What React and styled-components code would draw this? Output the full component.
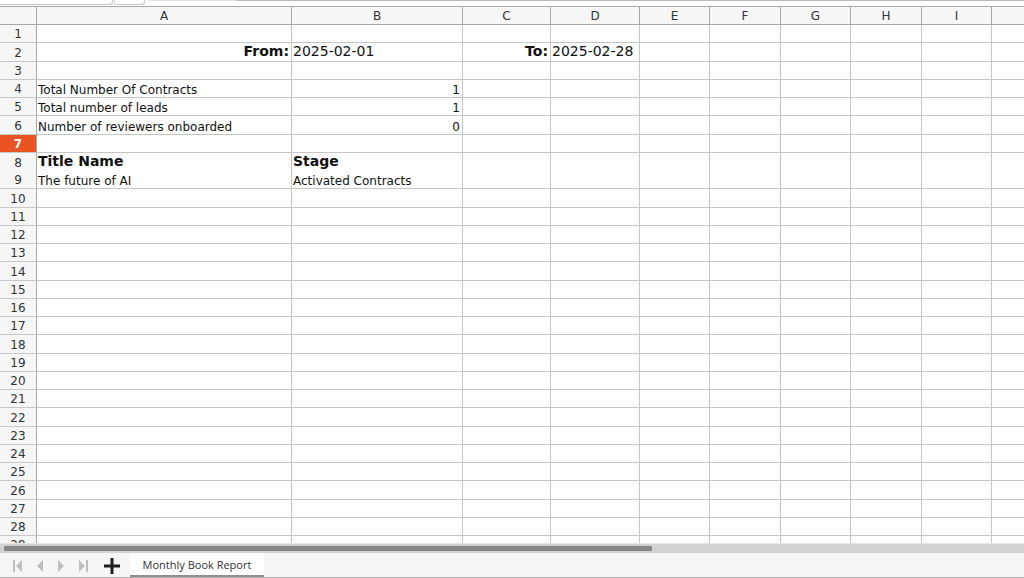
import React from 'react';
import styled, { createGlobalStyle } from 'styled-components';

const GlobalStyle = createGlobalStyle`
  html, body {
    margin: 0;
    padding: 0;
    overflow: hidden;
    background: #ffffff;
  }
  * {
    box-sizing: border-box;
  }
`;

const COLUMNS = ['A', 'B', 'C', 'D', 'E', 'F', 'G', 'H', 'I', 'J'];
const GRID = '37px 255px 171px 88px 89px 70px 71px 70px 71px 70px 70px';

const cells = {
  2: {
    A: { text: 'From:', bold: true, big: true, right: true },
    B: { text: '2025-02-01', big: true },
    C: { text: 'To:', bold: true, big: true, right: true },
    D: { text: '2025-02-28', big: true },
  },
  4: { A: { text: 'Total Number Of Contracts' }, B: { text: '1', right: true } },
  5: { A: { text: 'Total number of leads' }, B: { text: '1', right: true } },
  6: { A: { text: 'Number of reviewers onboarded' }, B: { text: '0', right: true } },
  8: {
    A: { text: 'Title Name', bold: true, big: true },
    B: { text: 'Stage', bold: true, big: true },
  },
  9: { A: { text: 'The future of AI' }, B: { text: 'Activated Contracts' } },
};

const rows = Array.from({ length: 29 }, (_, i) => {
  const top = Math.round(24 + 18.25 * i);
  const bottom = Math.round(24 + 18.25 * (i + 1));
  return { n: i + 1, height: bottom - top };
});

const App = () => {
  return (
    <Window>
      <GlobalStyle />
      <TopStrip>
        <NameBox />
        <NameButton />
        <FormulaEdge />
      </TopStrip>
      <Sheet>
        <HeaderRow>
          <Corner />
          {COLUMNS.map((c) => (
            <ColHeader key={c}>{c === 'J' ? '' : c}</ColHeader>
          ))}
        </HeaderRow>
        {rows.map((r) => (
          <Row key={r.n} $h={r.height}>
            <RowHeader $active={r.n === 7}>{r.n}</RowHeader>
            {COLUMNS.map((c) => {
              const cell = cells[r.n] && cells[r.n][c];
              return (
                <Cell key={c} $right={cell && cell.right} $big={cell && cell.big}>
                  {cell && (
                    <CellText $bold={cell.bold} $big={cell.big}>
                      {cell.text}
                    </CellText>
                  )}
                </Cell>
              );
            })}
          </Row>
        ))}
      </Sheet>
      <ScrollTrack>
        <ScrollThumb />
      </ScrollTrack>
      <TabBar>
        <NavGroup>
          <NavButton>
            <svg width="10" height="12" viewBox="0 0 10 12">
              <rect x="0" y="0" width="2" height="12" fill="#bdbdbd" />
              <path d="M9 0 L3 6 L9 12 Z" fill="#bdbdbd" />
            </svg>
          </NavButton>
          <NavButton>
            <svg width="8" height="12" viewBox="0 0 8 12">
              <path d="M7 0 L1 6 L7 12 Z" fill="#bdbdbd" />
            </svg>
          </NavButton>
          <NavButton>
            <svg width="8" height="12" viewBox="0 0 8 12">
              <path d="M1 0 L7 6 L1 12 Z" fill="#bdbdbd" />
            </svg>
          </NavButton>
          <NavButton>
            <svg width="10" height="12" viewBox="0 0 10 12">
              <path d="M1 0 L7 6 L1 12 Z" fill="#bdbdbd" />
              <rect x="8" y="0" width="2" height="12" fill="#bdbdbd" />
            </svg>
          </NavButton>
        </NavGroup>
        <AddButton>
          <svg width="16" height="16" viewBox="0 0 16 16">
            <rect x="0" y="6.5" width="16" height="3" fill="#1e1e1e" />
            <rect x="6.5" y="0" width="3" height="16" fill="#1e1e1e" />
          </svg>
        </AddButton>
        <SheetTab>Monthly Book Report</SheetTab>
      </TabBar>
    </Window>
  );
};

export default App;

const Window = styled.div`
  width: 1024px;
  height: 578px;
  display: flex;
  flex-direction: column;
  overflow: hidden;
  font-family: "DejaVu Sans", "Liberation Sans", sans-serif;
  color: #222;
`;

const TopStrip = styled.div`
  height: 6px;
  display: flex;
  flex-shrink: 0;
  background: #ffffff;
`;

const NameBox = styled.div`
  width: 113px;
  height: 5px;
  border-right: 1px solid #c8c8c8;
  border-bottom: 1px solid #c8c8c8;
  border-bottom-right-radius: 3px;
`;

const NameButton = styled.div`
  width: 31px;
  height: 5px;
  margin-left: 1px;
  border-right: 1px solid #c8c8c8;
  border-bottom: 1px solid #c8c8c8;
  border-left: 1px solid #dcdcdc;
  border-bottom-right-radius: 3px;
`;

const FormulaEdge = styled.div`
  flex: 1;
  margin-left: 3px;
  height: 1px;
  background: linear-gradient(to right, #e4e4e4 0, #e4e4e4 88px, #b8b8b8 88px, #b8b8b8 100%);
`;

const Sheet = styled.div`
  flex: 1;
  overflow: hidden;
  border-top: 1px solid #a8a8a8;
`;

const HeaderRow = styled.div`
  display: grid;
  grid-template-columns: ${GRID};
  height: 18px;
  background: #f6f6f6;
`;

const Corner = styled.div`
  border-right: 1px solid #a8a8a8;
  border-bottom: 1px solid #a8a8a8;
`;

const ColHeader = styled.div`
  display: flex;
  align-items: center;
  justify-content: center;
  font-size: 12px;
  color: #333;
  border-right: 1px solid #a8a8a8;
  border-bottom: 1px solid #a8a8a8;
  padding-top: 1px;
`;

const Row = styled.div`
  display: grid;
  grid-template-columns: ${GRID};
  height: ${(p) => p.$h}px;
`;

const RowHeader = styled.div`
  display: flex;
  align-items: center;
  justify-content: center;
  font-size: 12px;
  padding-top: 1px;
  color: ${(p) => (p.$active ? '#ffffff' : '#333')};
  font-weight: ${(p) => (p.$active ? 700 : 400)};
  background: ${(p) => (p.$active ? '#e95420' : '#f6f6f6')};
  border-right: 1px solid #a8a8a8;
  border-bottom: 1px solid #c8c8c8;
`;

const Cell = styled.div`
  display: flex;
  align-items: flex-end;
  justify-content: ${(p) => (p.$right ? 'flex-end' : 'flex-start')};
  padding: 0 2px ${(p) => (p.$big ? '1px' : '0')} 1px;
  border-right: 1px solid #c6c6c6;
  border-bottom: 1px solid #c6c6c6;
  background: #ffffff;
  white-space: nowrap;
`;

const CellText = styled.span`
  font-size: ${(p) => (p.$big ? '14px' : '12px')};
  font-weight: ${(p) => (p.$bold ? 700 : 400)};
  line-height: ${(p) => (p.$big ? '17px' : '14px')};
  color: #111;
`;

const ScrollTrack = styled.div`
  height: 10px;
  flex-shrink: 0;
  background: #d2d2d2;
  padding: 2px 0 2px 4px;
  border-top: 1px solid #e6e6e6;
`;

const ScrollThumb = styled.div`
  width: 648px;
  height: 100%;
  background: #868686;
  border-radius: 1px;
`;

const TabBar = styled.div`
  height: 25px;
  flex-shrink: 0;
  display: flex;
  align-items: stretch;
  background: #f6f6f6;
  border-bottom: 1px solid #b4b4b4;
  padding-left: 13px;
`;

const NavGroup = styled.div`
  display: flex;
  align-items: center;
  gap: 13px;
`;

const NavButton = styled.div`
  display: flex;
  align-items: center;
  justify-content: center;
  padding-top: 2px;
`;

const AddButton = styled.div`
  display: flex;
  align-items: center;
  margin-left: 16px;
  padding-top: 1px;
`;

const SheetTab = styled.div`
  margin-left: 10px;
  width: 134px;
  display: flex;
  align-items: center;
  justify-content: center;
  background: #ffffff;
  border-bottom: 2px solid #8f8f8f;
  font-family: "Open Sans", "DejaVu Sans", sans-serif;
  font-size: 11px;
  color: #333;
  padding-top: 1px;
`;
